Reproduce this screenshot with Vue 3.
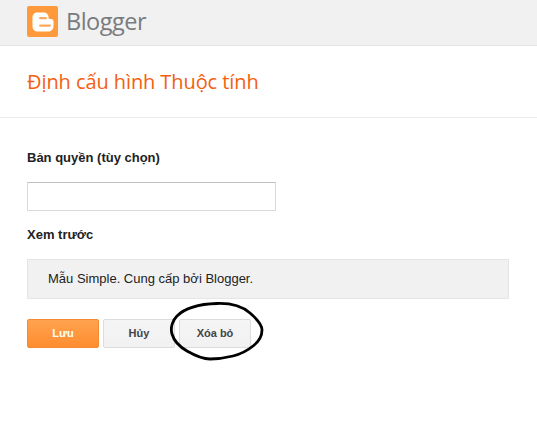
<template>
  <div class="page">
    <header class="topbar">
      <svg class="logo" viewBox="0 0 31 31" width="31" height="31">
        <rect width="31" height="31" rx="2" fill="#ff9a3c" />
        <path
          d="M10.500 6.500h6c3 0 5 2 5 4.500v.5c0 1 .5 1.500 1.500 1.500h1c1.500 0 2.500 1 2.500 2.500v4.500c0 3-2.200 5.500-5 5.500H10.500c-2.800 0-5-2.200-5-5v-9.500c0-2.500 2.200-4.500 5-4.500z"
          fill="#fff"
        />
        <rect x="12" y="11" width="8" height="2.200" rx="1.100" fill="#ffa95c" />
        <rect x="12" y="18.500" width="12" height="2.200" rx="1.100" fill="#ffa95c" />
      </svg>
      <span class="brand">Blogger</span>
    </header>

    <div class="title-row">
      <h1>Định cấu hình Thuộc tính</h1>
    </div>

    <main class="form">
      <label class="field-label" for="copyright">Bản quyền (tùy chọn)</label>
      <input id="copyright" class="text-input" type="text" />

      <h2 class="field-label preview-label">Xem trước</h2>
      <div class="preview">Mẫu Simple. Cung cấp bởi Blogger.</div>

      <div class="actions">
        <button class="btn primary">Lưu</button>
        <button class="btn">Hủy</button>
        <button class="btn">Xóa bỏ</button>
        <svg class="circle-mark" viewBox="0 0 96 60" width="96" height="60">
          <path
            d="M3 32C1 25 4 18 8 14 16 6 30 2 48 1.500 62 1 74 5 81 11 88 17 93 24 93 28 93 35 88 41 84 44 78 49 72 52 64 54 56 56 49 57 41 57 33 57 25 53 18 49 11 45 5 39 3 32Z"
            fill="none"
            stroke="#000"
            stroke-width="2.800"
          />
        </svg>
      </div>
    </main>
  </div>
</template>

<script setup>
</script>

<style>
html,
body {
  margin: 0;
  background: #fff;
}
</style>

<style scoped>
.page {
  width: 537px;
  height: 446px;
  overflow: hidden;
  font-family: "Liberation Sans", Arial, sans-serif;
  background: #fff;
}

.topbar {
  display: flex;
  align-items: flex-start;
  box-sizing: border-box;
  height: 46px;
  padding: 6px 0 0 27px;
  background: #f1f1f1;
  border-bottom: 1px solid #e5e5e5;
}

.logo {
  flex: none;
}

.brand {
  margin-left: 8px;
  font-family: "Open Sans", sans-serif;
  font-size: 23.5px;
  font-weight: 500;
  line-height: 30px;
  letter-spacing: -0.5px;
  color: #797b7e;
}

.title-row {
  box-sizing: border-box;
  height: 72px;
  padding: 0 27px;
  border-bottom: 1px solid #ebebeb;
}

h1 {
  margin: 0;
  padding-top: 22px;
  font-family: "Open Sans", sans-serif;
  font-size: 20px;
  font-weight: 400;
  line-height: 27px;
  letter-spacing: -0.08px;
  color: #f4600f;
}

.form {
  padding: 32px 28px 0 27px;
}

.field-label {
  display: block;
  margin: 0;
  font-size: 13px;
  font-weight: 700;
  line-height: 15px;
  color: #222;
}

.text-input {
  display: block;
  box-sizing: border-box;
  width: 249px;
  height: 29px;
  margin-top: 17px;
  padding: 0 8px;
  background: #fff;
  border: 1px solid #d9d9d9;
  border-top-color: #c0c0c0;
  outline: none;
}

.preview-label {
  margin-top: 16px;
}

.preview {
  box-sizing: border-box;
  height: 40px;
  margin-top: 17px;
  padding-left: 20px;
  font-size: 13px;
  line-height: 38px;
  color: #222;
  background: #f1f1f1;
  border: 1px solid #e5e5e5;
}

.actions {
  position: relative;
  display: flex;
  gap: 4px;
  margin-top: 20px;
}

.btn {
  box-sizing: border-box;
  width: 72px;
  height: 29px;
  padding: 0 0 2px;
  font-family: "Liberation Sans", Arial, sans-serif;
  font-size: 11px;
  font-weight: 700;
  color: #444;
  background: linear-gradient(#f5f5f5, #f1f1f1);
  border: 1px solid #dcdcdc;
  border-radius: 2px;
}

.primary {
  color: #fff;
  background: linear-gradient(#ffa350, #ff8d2e);
  border-color: #f58a32;
}

.circle-mark {
  position: absolute;
  left: 142px;
  top: -17px;
}
</style>
